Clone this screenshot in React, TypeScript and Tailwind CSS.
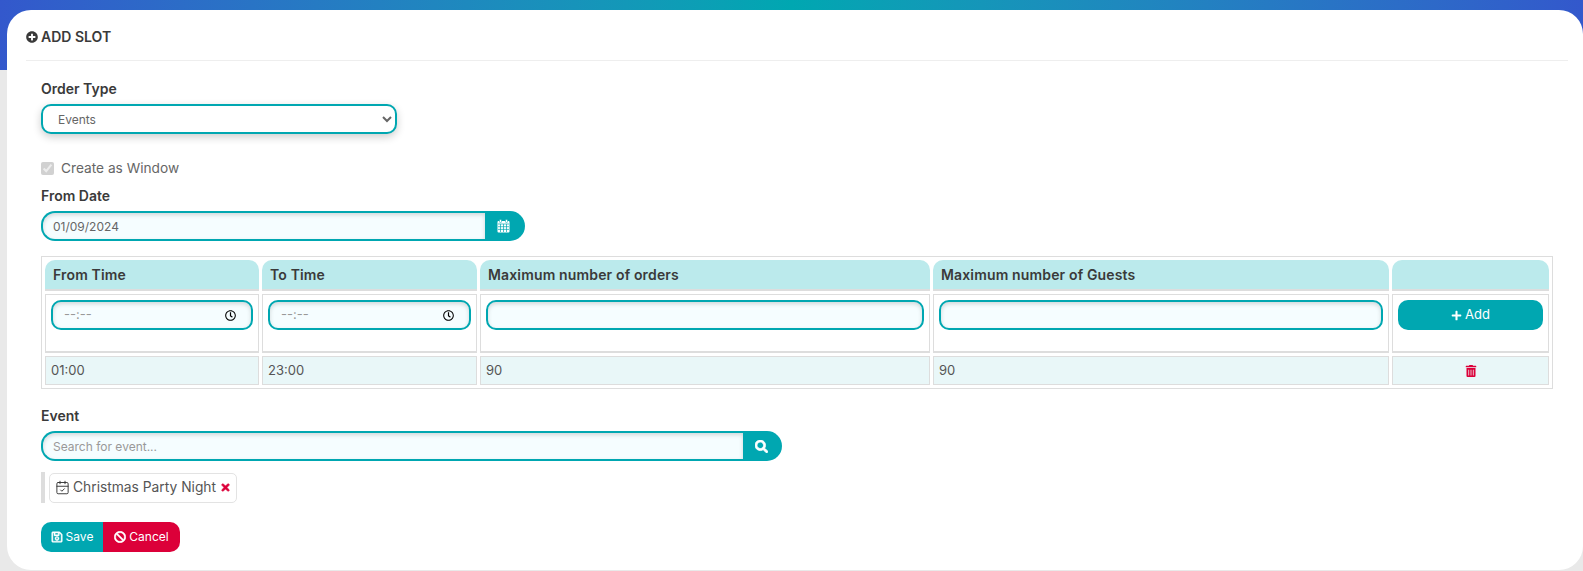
import { CalendarCheck } from 'lucide-react';
import { FaBan, FaPlus, FaPlusCircle, FaRegClock, FaRegSave, FaSearch, FaTimes, FaTrashAlt } from 'react-icons/fa';

const inputBox =
  'h-[30px] rounded-[10px] border-2 border-[#00a7b1] bg-[#f5fdff] shadow-[inset_0_2px_4px_rgba(0,0,0,0.15)]';
const headCell =
  'h-[31px] rounded-t-[10px] border-b-2 border-[#dddddd] bg-[#bbeaec] px-[8px] text-left text-[14px] tracking-[0.15px] font-semibold text-[#3a3a3a]';
const inputCell = 'h-[59px] border border-b-2 border-[#dddddd] p-[5px] align-top';
const dataCell = 'h-[29px] border border-[#dddddd] bg-[#e9f7f8] px-[5px] text-[13px] text-[#555555]';

function TimeInput() {
  return (
    <div className={`${inputBox} flex items-center justify-between pr-[15px] pl-[11px]`}>
      <input placeholder="--:--" className="w-16 bg-transparent text-[13px] outline-none placeholder:text-[#999999]" />
      <FaRegClock className="text-[11px] text-black" />
    </div>
  );
}

function GridCalendar() {
  return (
    <svg width="13" height="14" viewBox="0 0 13 14" fill="none">
      <rect x="0.5" y="2" width="12" height="11.5" rx="1" fill="white" />
      <rect x="2.5" y="0.5" width="2" height="3" rx="0.6" fill="white" stroke="#00a7b1" strokeWidth="0.5" />
      <rect x="8.5" y="0.5" width="2" height="3" rx="0.6" fill="white" stroke="#00a7b1" strokeWidth="0.5" />
      <path d="M1 5h11M1 7.7h11M1 10.4h11M3.5 5v8M6.5 5v8M9.5 5v8" stroke="#00a7b1" strokeWidth="0.7" />
    </svg>
  );
}

export default function App() {
  return (
    <div className="min-h-[571px] overflow-hidden bg-[#e9e9e9] font-['Inter',sans-serif] text-[#3a3a3a]">
      <div className="h-[70px] bg-gradient-to-r from-[#3358cc] via-[#00a7b1] to-[#3358cc]" />

      <main className="relative -mt-[60px] ml-[7px] h-[560px] rounded-[24px] bg-white pt-[19px] pr-[15px] pl-[19px]">
        <h2 className="flex h-[32px] items-start gap-[3px] border-b border-[#eeeeee] text-[14px] leading-[15px] font-semibold">
          <FaPlusCircle className="mt-[2px] text-[12px]" />
          ADD SLOT
        </h2>

        <form className="pt-[19px] pr-[15px] pl-[15px]">
          <label className="block text-[14px] leading-[18px] font-semibold">Order Type</label>
          <select className="mt-[6px] block h-[30px] w-[356px] rounded-[10px] border-2 border-[#00a7b1] bg-white pl-[11px] text-[12px] text-[#666666] shadow-[0_3px_8px_rgba(0,0,0,0.2)] outline-none">
            <option>Events</option>
          </select>

          <div className="mt-[27px] flex items-center gap-[7px]">
            <input type="checkbox" checked disabled readOnly className="m-0 size-[13px]" />
            <span className="text-[13.7px] leading-[14px] text-[#666666]">Create as Window</span>
          </div>

          <label className="mt-[12px] block text-[14px] leading-[18px] font-semibold">From Date</label>
          <div className="mt-[6px] flex h-[30px] w-[484px]">
            <input
              defaultValue="01/09/2024"
              className="h-[30px] min-w-0 flex-1 rounded-l-[14px] border-2 border-r-0 border-[#00a7b1] bg-[#f5fdff] pl-[10px] text-[12px] text-[#666666] shadow-[inset_0_2px_4px_rgba(0,0,0,0.15)] outline-none"
            />
            <button type="button" className="flex w-[40px] items-center justify-center rounded-r-[15px] bg-[#00a7b1] pr-[3px] text-white">
              <GridCalendar />
            </button>
          </div>

          <div className="mt-[15px] border border-[#dddddd]">
            <table className="w-full table-fixed border-separate border-spacing-[3px]">
              <colgroup>
                <col className="w-[214px]" />
                <col className="w-[215px]" />
                <col className="w-[450px]" />
                <col className="w-[456px]" />
                <col />
              </colgroup>
              <thead>
                <tr>
                  <th className={headCell}>From Time</th>
                  <th className={headCell}>To Time</th>
                  <th className={headCell}>Maximum number of orders</th>
                  <th className={headCell}>Maximum number of Guests</th>
                  <th className={headCell}></th>
                </tr>
              </thead>
              <tbody>
                <tr>
                  <td className={inputCell}><TimeInput /></td>
                  <td className={inputCell}><TimeInput /></td>
                  <td className={inputCell}><div className={inputBox} /></td>
                  <td className={inputCell}><div className={inputBox} /></td>
                  <td className={inputCell}>
                    <button type="button" className="flex h-[30px] w-full items-center justify-center gap-[3px] rounded-[10px] bg-[#00a7b1] text-[13px] text-white">
                      <FaPlus className="text-[11px]" />
                      Add
                    </button>
                  </td>
                </tr>
                <tr>
                  <td className={dataCell}>01:00</td>
                  <td className={dataCell}>23:00</td>
                  <td className={dataCell}>90</td>
                  <td className={dataCell}>90</td>
                  <td className={dataCell}>
                    <FaTrashAlt className="mx-auto text-[12px] text-[#dc0039]" />
                  </td>
                </tr>
              </tbody>
            </table>
          </div>

          <label className="mt-[18px] block text-[14px] leading-[18px] font-semibold">Event</label>
          <div className="mt-[6px] flex h-[30px] w-[741px]">
            <input
              placeholder="Search for event..."
              className="h-[30px] min-w-0 flex-1 rounded-l-[14px] border-2 border-r-0 border-[#00a7b1] bg-[#f5fdff] pl-[10px] text-[12px] shadow-[inset_0_2px_4px_rgba(0,0,0,0.15)] outline-none placeholder:text-[#999999]"
            />
            <button type="button" className="flex w-[39px] items-center justify-center rounded-r-[15px] bg-[#00a7b1] pr-[3px] text-[13px] text-white">
              <FaSearch stroke="currentColor" strokeWidth={30} />
            </button>
          </div>

          <div className="mt-[11px] flex h-[31px] items-center border-l-[4px] border-[#dddddd] pl-[4px]">
            <span className="flex h-[30px] items-center gap-[3px] rounded-[5px] border border-[#e3e3e3] pr-[5px] pl-[5px] text-[13.8px] text-[#555555]">
              <CalendarCheck size={15} strokeWidth={1.5} className="text-[#333333]" />
              Christmas Party Night
              <FaTimes className="ml-[1px] text-[11px] text-[#dc0039]" stroke="currentColor" strokeWidth={30} />
            </span>
          </div>

          <div className="mt-[19px] flex h-[30px] text-[12px] text-white">
            <button type="button" className="flex w-[62px] items-center justify-center gap-[3px] rounded-l-[10px] bg-[#00a7b1]">
              <FaRegSave className="text-[12px]" stroke="currentColor" strokeWidth={20} />
              Save
            </button>
            <button type="button" className="flex w-[77px] items-center justify-center gap-[3px] rounded-r-[10px] bg-[#dc0039]">
              <FaBan className="text-[12px]" stroke="currentColor" strokeWidth={20} />
              Cancel
            </button>
          </div>
        </form>
      </main>
    </div>
  );
}
